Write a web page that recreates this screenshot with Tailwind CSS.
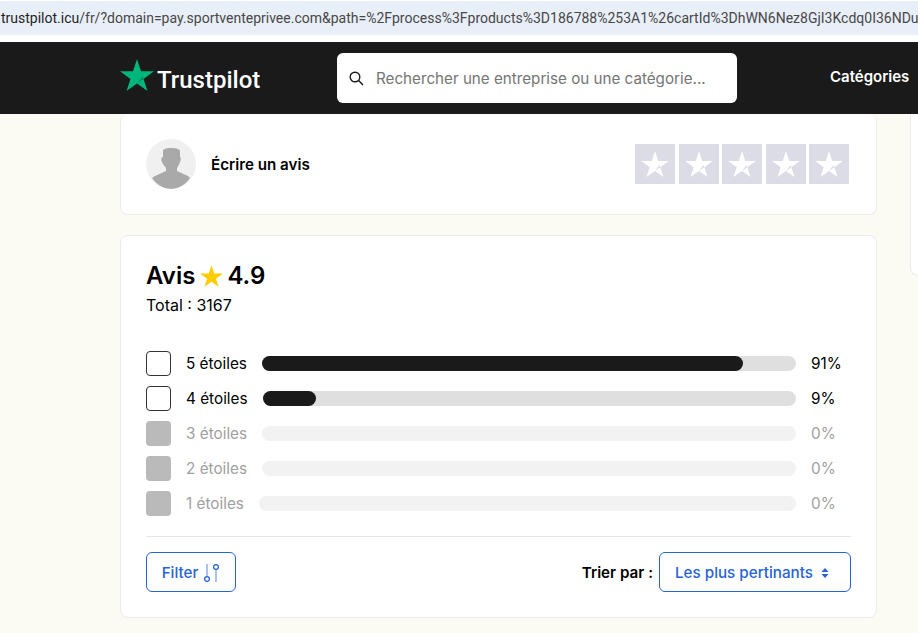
<!DOCTYPE html>
<html lang="fr">
<head>
  <meta charset="UTF-8" />
  <title>Trustpilot</title>
  <script src="https://cdn.jsdelivr.net/npm/@tailwindcss/browser@4"></script>
</head>
<body class="h-[633px] w-[918px] overflow-hidden bg-[#fcfbf3] font-['Inter',sans-serif] text-[15.2px] text-black">

  <!-- Browser address bar -->
  <div class="bg-white pt-px pb-[7px]">
    <div class="h-[34px] overflow-hidden whitespace-nowrap bg-[#e9eff8] pl-px font-['Roboto',sans-serif] text-[14px] leading-[35px] text-[#474747]"><span class="text-[#1f1f1f]">trustpilot.icu</span>/fr/?domain=pay.sportventeprivee.com&amp;path=%2Fprocess%3Fproducts%3D186788%253A1%26cartId%3DhWN6Nez8GjI3Kcdq0I36NDuf</div>
  </div>

  <!-- Header -->
  <header class="relative z-10 flex h-[72px] items-center bg-[#1a1a1a] pl-[120px] text-white">
    <a class="flex w-[217px] items-center">
      <svg class="mb-[6px] h-[32px] w-[34px]" viewBox="0 0 34 32">
        <polygon fill="#00b67a" points="17,0 21,12.3 34,12.3 23.5,20 27.5,32 17,24.5 6.5,32 10.5,20 0,12.3 13,12.3"/>
        <polygon fill="#058a5e" points="23.5,20 22.6,17.2 17,24.5"/>
      </svg>
      <span class="ml-[3px] mt-[3px] font-['Roboto',sans-serif] text-[24px] font-medium">Trustpilot</span>
    </a>
    <div class="flex h-[50px] w-[400px] items-center rounded-[6px] bg-white pl-[12px] text-[#757575]">
      <svg class="h-[15px] w-[15px]" viewBox="0 0 15 15" fill="none" stroke="#1a1a1a" stroke-width="1.4">
        <circle cx="6" cy="6" r="4.8"/>
        <path d="M9.6 9.6 14 14"/>
      </svg>
      <span class="ml-[12px] mt-[3px]">Rechercher une entreprise ou une catégorie...</span>
    </div>
    <span class="mb-[1px] ml-[93px] whitespace-nowrap text-[15px] font-semibold">Catégories</span>
  </header>

  <main class="flex items-start pl-[120px]">
    <div class="w-[757px] shrink-0">
      <!-- Write a review -->
      <section class="flex h-[101px] items-center justify-between rounded-[8px] border border-t-0 border-[#ebebeb] bg-white pl-[25px] pr-[27px]">
        <div class="flex items-center">
          <div class="h-[50px] w-[50px] overflow-hidden rounded-full bg-[#f0f0f0]">
            <svg class="h-[50px] w-[50px]" viewBox="0 0 50 50" fill="#a9a9a9">
              <path d="M17 12c0-2 3-3 8-3s9 1 9 3v6c1 0 1 3 0 5-1 3-2 4-3 6v3l11 5 2 2c-4 6-11 11-19 11S10 45 6 39l3-2 11-5v-3c-1-2-3-3-4-6-1-2-1-5 1-5z"/>
            </svg>
          </div>
          <span class="ml-[15px] mt-[2px] font-semibold">Écrire un avis</span>
        </div>
        <div class="flex gap-[3.4px]">
          <div class="flex h-[40px] w-[40px] items-center justify-center bg-[#dcdce6]"><svg class="h-[26px] w-[28px]" viewBox="0 0 34 32"><polygon fill="#fff" points="17,0 21,12.3 34,12.3 23.5,20 27.5,32 17,24.5 6.5,32 10.5,20 0,12.3 13,12.3"/><polygon fill="#dcdce6" points="23.5,20 22.6,17.2 17,24.5"/></svg></div>
          <div class="flex h-[40px] w-[40px] items-center justify-center bg-[#dcdce6]"><svg class="h-[26px] w-[28px]" viewBox="0 0 34 32"><polygon fill="#fff" points="17,0 21,12.3 34,12.3 23.5,20 27.5,32 17,24.5 6.5,32 10.5,20 0,12.3 13,12.3"/><polygon fill="#dcdce6" points="23.5,20 22.6,17.2 17,24.5"/></svg></div>
          <div class="flex h-[40px] w-[40px] items-center justify-center bg-[#dcdce6]"><svg class="h-[26px] w-[28px]" viewBox="0 0 34 32"><polygon fill="#fff" points="17,0 21,12.3 34,12.3 23.5,20 27.5,32 17,24.5 6.5,32 10.5,20 0,12.3 13,12.3"/><polygon fill="#dcdce6" points="23.5,20 22.6,17.2 17,24.5"/></svg></div>
          <div class="flex h-[40px] w-[40px] items-center justify-center bg-[#dcdce6]"><svg class="h-[26px] w-[28px]" viewBox="0 0 34 32"><polygon fill="#fff" points="17,0 21,12.3 34,12.3 23.5,20 27.5,32 17,24.5 6.5,32 10.5,20 0,12.3 13,12.3"/><polygon fill="#dcdce6" points="23.5,20 22.6,17.2 17,24.5"/></svg></div>
          <div class="flex h-[40px] w-[40px] items-center justify-center bg-[#dcdce6]"><svg class="h-[26px] w-[28px]" viewBox="0 0 34 32"><polygon fill="#fff" points="17,0 21,12.3 34,12.3 23.5,20 27.5,32 17,24.5 6.5,32 10.5,20 0,12.3 13,12.3"/><polygon fill="#dcdce6" points="23.5,20 22.6,17.2 17,24.5"/></svg></div>
        </div>
      </section>

      <!-- Reviews summary -->
      <section class="mt-[20px] h-[383px] rounded-[8px] border border-[#ebebeb] bg-white pl-[25px] pr-[25px] pt-[24px]">
        <h2 class="flex h-[32px] items-center text-[24px] font-semibold leading-[32px]">
          Avis
          <svg class="ml-[5px] mr-[4px] h-[22px] w-[23px]" viewBox="0 0 34 32">
            <polygon fill="#ffcc00" points="17,0 21,12.3 34,12.3 23.5,20 27.5,32 17,24.5 6.5,32 10.5,20 0,12.3 13,12.3"/>
          </svg>
          4.9
        </h2>
        <p class="mt-[1px] text-[16px] leading-[24px]">Total : 3167</p>

        <div class="mt-[34px] flex flex-col gap-[10px] text-[15.3px]">
          <div class="flex h-[25px] items-center">
            <span class="h-[25px] w-[25px] rounded-[4px] border border-[#333] bg-white"></span>
            <span class="ml-[15px] mr-[15px] pt-[1px]">5 étoiles</span>
            <div class="h-[15px] flex-1 rounded-full bg-[#dfdfdf]"><div class="h-[15px] w-[90.1%] rounded-full bg-[#1a1a1a]"></div></div>
            <span class="ml-[15px] w-[40px] pt-[1px]">91%</span>
          </div>
          <div class="flex h-[25px] items-center">
            <span class="h-[25px] w-[25px] rounded-[4px] border border-[#333] bg-white"></span>
            <span class="ml-[15px] mr-[15px] pt-[1px]">4 étoiles</span>
            <div class="h-[15px] flex-1 rounded-full bg-[#dfdfdf]"><div class="h-[15px] w-[10%] rounded-full bg-[#1a1a1a]"></div></div>
            <span class="ml-[15px] w-[40px] pt-[1px]">9%</span>
          </div>
          <div class="flex h-[25px] items-center text-[#9f9f9f]">
            <span class="h-[25px] w-[25px] rounded-[4px] bg-[#bababa]"></span>
            <span class="ml-[15px] mr-[15px] pt-[1px]">3 étoiles</span>
            <div class="h-[15px] flex-1 rounded-full bg-[#f2f2f2]"></div>
            <span class="ml-[15px] w-[40px] pt-[1px]">0%</span>
          </div>
          <div class="flex h-[25px] items-center text-[#9f9f9f]">
            <span class="h-[25px] w-[25px] rounded-[4px] bg-[#bababa]"></span>
            <span class="ml-[15px] mr-[15px] pt-[1px]">2 étoiles</span>
            <div class="h-[15px] flex-1 rounded-full bg-[#f2f2f2]"></div>
            <span class="ml-[15px] w-[40px] pt-[1px]">0%</span>
          </div>
          <div class="flex h-[25px] items-center text-[#9f9f9f]">
            <span class="h-[25px] w-[25px] rounded-[4px] bg-[#bababa]"></span>
            <span class="ml-[15px] mr-[15px] pt-[1px]">1 étoiles</span>
            <div class="h-[15px] flex-1 rounded-full bg-[#f2f2f2]"></div>
            <span class="ml-[15px] w-[40px] pt-[1px]">0%</span>
          </div>
        </div>

        <div class="mt-[20px] flex items-center justify-between border-t border-[#e6e6e6] pt-[15px]">
          <button class="flex h-[40px] w-[90px] items-center justify-center rounded-[6px] border border-[#2563d8] pt-[2px] font-medium text-[#2563d8]">
            Filter
            <svg class="ml-[4px] h-[18px] w-[18px]" viewBox="0 0 18 18" fill="none" stroke="#7ba3ee" stroke-width="1.3">
              <path d="M5 0v12.5M14 6v12"/>
              <circle cx="5" cy="15" r="2.4" stroke="#2563d8"/>
              <circle cx="14" cy="3" r="2.4" stroke="#2563d8"/>
            </svg>
          </button>
          <div class="flex items-center">
            <span class="mr-[6px] pt-[2px] font-semibold">Trier par :</span>
            <button class="flex h-[40px] w-[192px] items-center rounded-[6px] border border-[#2563d8] pl-[15px] pt-[2px] font-medium text-[#2563d8]">
              Les plus pertinants
              <svg class="ml-[8px] h-[10px] w-[8px]" viewBox="0 0 8 10" fill="#2563d8"><path d="M4 0 7.5 4h-7zM4 10 .5 6h7z"/></svg>
            </button>
          </div>
        </div>
      </section>
    </div>

    <!-- Next column, cut off by the window edge -->
    <aside class="ml-[33px] h-[162px] w-[40px] shrink-0 rounded-b-[8px] border border-t-0 border-[#ebebeb] bg-white"></aside>
  </main>
</body>
</html>
